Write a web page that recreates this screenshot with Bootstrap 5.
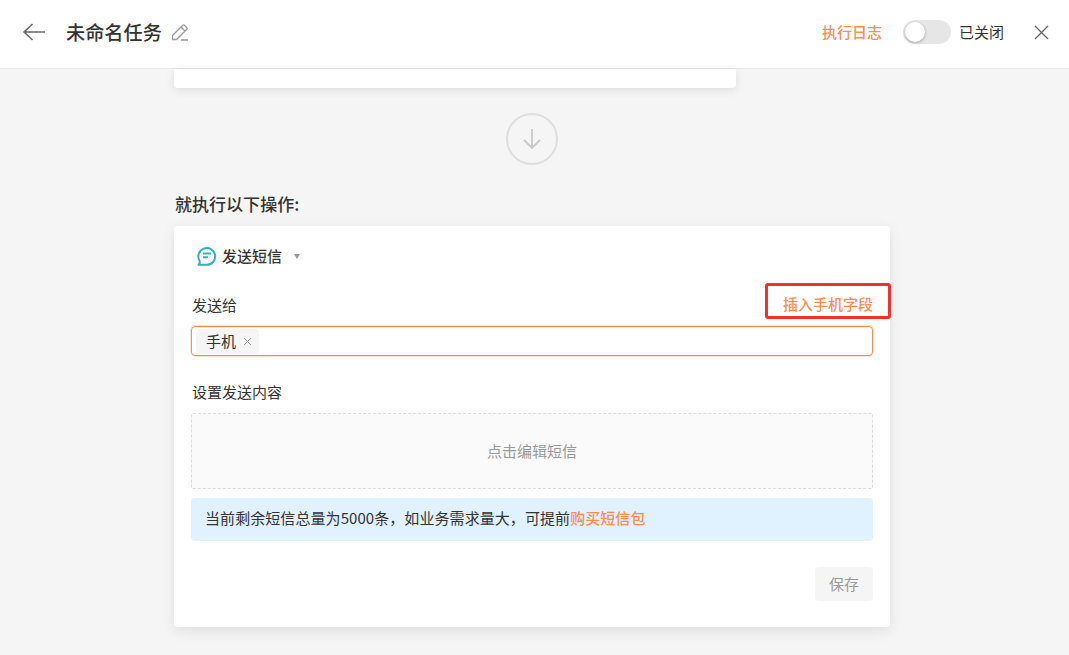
<!DOCTYPE html>
<html lang="zh">
<head>
<meta charset="utf-8">
<title>未命名任务</title>
<link href="https://cdn.jsdelivr.net/npm/bootstrap@5.3.0/dist/css/bootstrap.min.css" rel="stylesheet">
<style>
html,body{height:100%;overflow:hidden}
body{font-family:"Noto Sans CJK SC","Noto Sans",sans-serif;font-size:15px;color:#333;background:#f5f5f5}
.app-head{height:69px;background:#fff;border-bottom:1px solid #e8e8e8;padding:0 20px 4px 22px}
.title{font-size:19.200px;font-weight:500;line-height:26px;margin:0 0 0 20px;color:#333}
.orange{color:#ff8c4f}
.log{font-weight:500;line-height:20px;margin-right:21px}
.tog{width:48px;height:24px;border-radius:12px;background:#e6e6e6;padding:2px;margin-right:8px}
.tog i{display:block;width:20px;height:20px;border-radius:50%;background:#fff;box-shadow:0 1px 3px rgba(0,0,0,.3)}
.stat{line-height:20px;margin-right:30px}
.edit{margin-left:9px}
.col-main{width:716px;margin-left:174px}
.top-card{width:562px;height:19px;background:#fff;border-radius:0 0 4px 4px;box-shadow:0 2px 10px rgba(0,0,0,.1)}
.arrow{margin:25px auto 0;width:52px;height:52px;border:2px solid #dedede;border-radius:50%}
.h-act{font-size:17px;font-weight:500;line-height:24px;margin:27px 0 10px 1px;letter-spacing:.03px;color:#333}
.main-card{height:401px;background:#fff;border-radius:4px;padding:0 17px;box-shadow:0 4px 14px rgba(0,0,0,.09);position:relative}
.pick{height:60px;padding-left:6px}
.pick span{margin-left:5px;font-weight:500;line-height:20px}
.caret-d{width:0;height:0;border-left:3.5px solid transparent;border-right:3.5px solid transparent;border-top:5px solid #999;margin-left:12px}
.lab{line-height:20px;margin:0 0 0 1px;position:relative;top:-1px}
.ins{font-weight:500;line-height:20px;position:relative;top:-2px}
.row-l{margin-top:10px;height:20px}
.tag-in{height:30px;margin-top:10px;border:1px solid #ff8c4f;border-radius:4px;box-shadow:0 0 0 1px rgba(255,140,79,.25);padding:2px 4px}
.chip{height:24px;background:#f5f5f5;border-radius:4px;padding:0 7px 0 10px;line-height:24px}
.chip svg{margin-left:7px}
.lab2{margin-top:27px}
.drop{height:76px;margin-top:10px;background:#fafafa;border:1px dashed #dcdcdc;border-radius:2px;color:#999;line-height:20px}
.tip{height:43px;margin-top:9px;background:#e0f1ff;border-radius:4px;padding:0 14px 4px;line-height:20px;color:#333;letter-spacing:.07px}
.tip a{font-weight:500;text-decoration:none}
.save{width:58px;height:34px;margin-top:26px;background:#f5f5f5;border-radius:4px;border:0;color:#999;padding:0;font-size:15px}
.annot{position:absolute;left:591px;top:57px;width:126px;height:36px;border:3px solid #f5302a;border-radius:3px;pointer-events:none}
</style>
</head>
<body>
<header class="app-head d-flex align-items-center">
  <svg width="24" height="20" viewBox="0 0 24 20" fill="none" stroke="#666" stroke-width="1.5"><path d="M23 10H2M10.500 2 2 10l8.500 8"/></svg>
  <h1 class="title">未命名任务</h1>
  <svg class="edit" width="18" height="18" viewBox="0 0 18 18" fill="none" stroke="#999" stroke-width="1.300"><path d="M1.500 16.500v-4L11.800 2.300a1.200 1.200 0 0 1 1.700 0l2.300 2.300a1.200 1.200 0 0 1 0 1.700L5.500 16.500H1.500zM10 4l4 4M10 17h7"/></svg>
  <div class="ms-auto d-flex align-items-center">
    <span class="log orange">执行日志</span>
    <div class="tog"><i></i></div>
    <span class="stat">已关闭</span>
    <svg width="15" height="15" viewBox="0 0 15 15" fill="none" stroke="#666" stroke-width="1.300"><path d="M1 1l13 13M14 1 1 14"/></svg>
  </div>
</header>
<main class="col-main">
  <div class="top-card"></div>
  <div class="arrow d-flex align-items-center justify-content-center">
    <svg width="20" height="22" viewBox="0 0 20 22" fill="none" stroke="#c8c8c8" stroke-width="1.800"><path d="M10 1v19M2 12l8 8 8-8"/></svg>
  </div>
  <h2 class="h-act">就执行以下操作:</h2>
  <section class="main-card">
    <div class="pick d-flex align-items-center">
      <svg width="20" height="20" viewBox="0 0 20 20" fill="none" stroke="#2fb3bd" stroke-width="2"><path d="M1.500 18.800h8.300a8.400 8.400 0 1 0-7.200-4l.1 2.400z" stroke-linejoin="round"/><path d="M6 7.500h8M6 11.300h5"/></svg>
      <span>发送短信</span><i class="caret-d"></i>
    </div>
    <div class="row-l d-flex justify-content-between">
      <p class="lab">发送给</p><a class="ins orange text-decoration-none" href="#">插入手机字段</a>
    </div>
    <div class="tag-in d-flex align-items-center">
      <div class="chip d-flex align-items-center">手机
        <svg width="9" height="9" viewBox="0 0 9 9" fill="none" stroke="#999"><path d="M1 1l7 7M8 1 1 8"/></svg>
      </div>
    </div>
    <p class="lab lab2">设置发送内容</p>
    <div class="drop d-flex align-items-center justify-content-center">点击编辑短信</div>
    <div class="tip d-flex align-items-center"><span>当前剩余短信总量为5000条，如业务需求量大，可提前<a class="orange" href="#">购买短信包</a></span></div>
    <div class="d-flex justify-content-end"><button class="btn save" type="button">保存</button></div>
    <div class="annot"></div>
  </section>
</main>
<script src="https://cdn.jsdelivr.net/npm/bootstrap@5.3.0/dist/js/bootstrap.bundle.min.js"></script>
</body>
</html>
